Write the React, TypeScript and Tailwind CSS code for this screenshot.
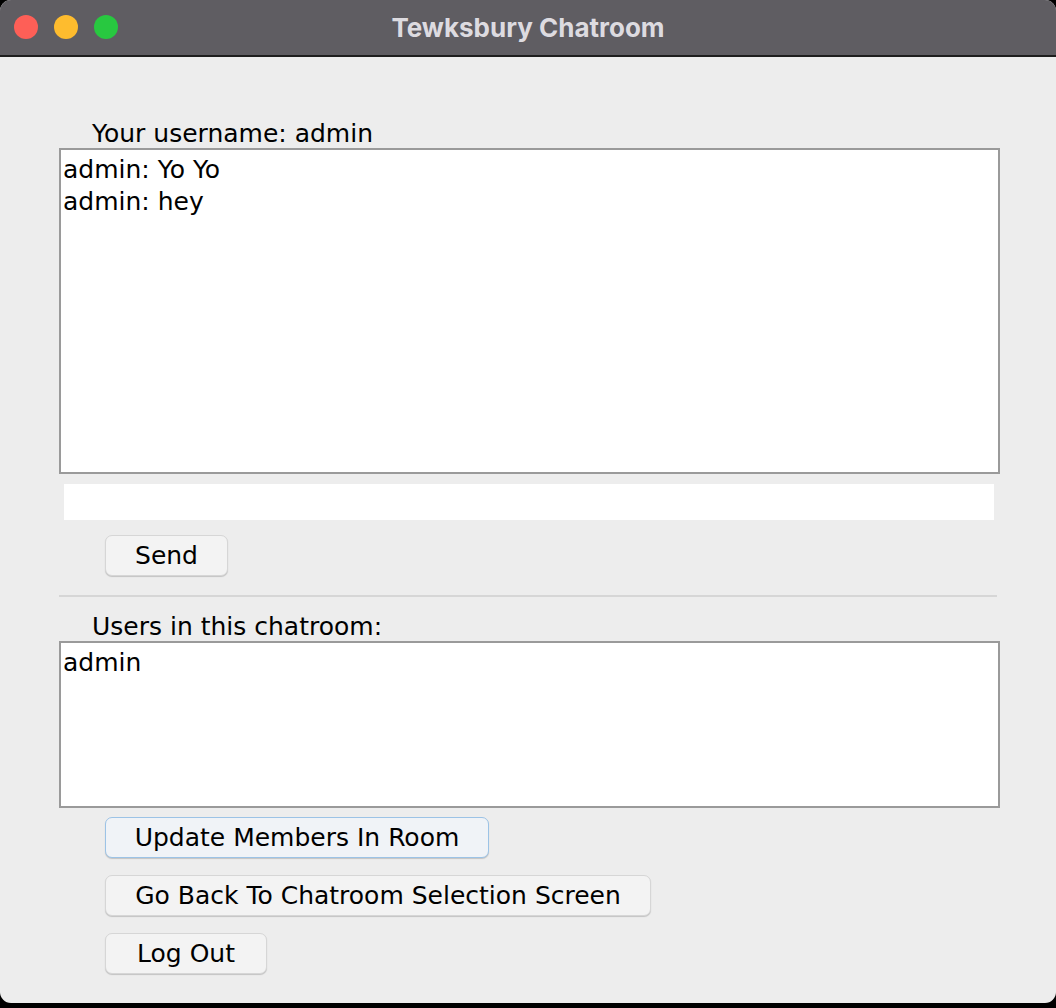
import React from "react";

const ui = { fontFamily: '"DejaVu Sans", "Liberation Sans", sans-serif' };

function MacButton({
  label,
  width,
  focused = false,
}: {
  label: string;
  width: string;
  focused?: boolean;
}) {
  const tone = focused
    ? "border-[#9cc3e6] bg-[#f0f3f7]"
    : "border-[#d6d6d6] bg-[#f3f3f3]";
  return (
    <button
      className={`h-[41px] ${width} ${tone} rounded-[7px] border text-[25px] leading-none text-black shadow-[0_1px_1px_rgba(0,0,0,0.18)]`}
      style={ui}
    >
      {label}
    </button>
  );
}

export default function App() {
  return (
    <div className="h-[1008px] w-[1056px] overflow-hidden bg-black">
      <div className="flex h-[1003px] w-full flex-col overflow-hidden rounded-[11px] bg-[#ededed]">
        {/* title bar */}
        <div className="relative flex h-[57px] shrink-0 items-center justify-center border-b-2 border-[#1e1e1e] bg-[#5f5d62]">
          <div className="absolute left-[14px] top-[15px] flex gap-[16px]">
            <span className="h-[24px] w-[24px] rounded-full bg-[#fe5f57]" />
            <span className="h-[24px] w-[24px] rounded-full bg-[#febc2e]" />
            <span className="h-[24px] w-[24px] rounded-full bg-[#28c840]" />
          </div>
          <span
            className="text-[26px] font-bold text-[#dddbe0]"
            style={{ fontFamily: '"Inter", "Liberation Sans", sans-serif' }}
          >
            Tewksbury Chatroom
          </span>
        </div>

        {/* body */}
        <div className="flex flex-col px-[59px] pt-[62px] text-black" style={ui}>
          <div className="h-[29px] pl-[33px] text-[25px] leading-[29px]">
            Your username: admin
          </div>
          <div className="h-[326px] w-[941px] border-2 border-[#9a9a9a] bg-white px-[2px] pt-[4px] text-[25px] leading-[32px]">
            <div>admin: Yo Yo</div>
            <div>admin: hey</div>
          </div>
          <div className="ml-[5px] mt-[10px] h-[36px] w-[930px] bg-white" />
          <div className="ml-[46px] mt-[15px]">
            <MacButton label="Send" width="w-[123px]" />
          </div>
          <div className="mt-[19px] h-[2px] w-[938px] bg-[#d6d6d6]" />
          <div className="mt-[15px] h-[29px] pl-[33px] text-[25px] leading-[29px]">
            Users in this chatroom:
          </div>
          <div className="h-[167px] w-[941px] border-2 border-[#9a9a9a] bg-white px-[2px] pt-[4px] text-[25px] leading-[32px]">
            admin
          </div>
          <div className="ml-[46px] mt-[9px] flex flex-col items-start gap-[17px]">
            <MacButton label="Update Members In Room" width="w-[384px]" focused />
            <MacButton label="Go Back To Chatroom Selection Screen" width="w-[546px]" />
            <MacButton label="Log Out" width="w-[162px]" />
          </div>
        </div>
      </div>
    </div>
  );
}
